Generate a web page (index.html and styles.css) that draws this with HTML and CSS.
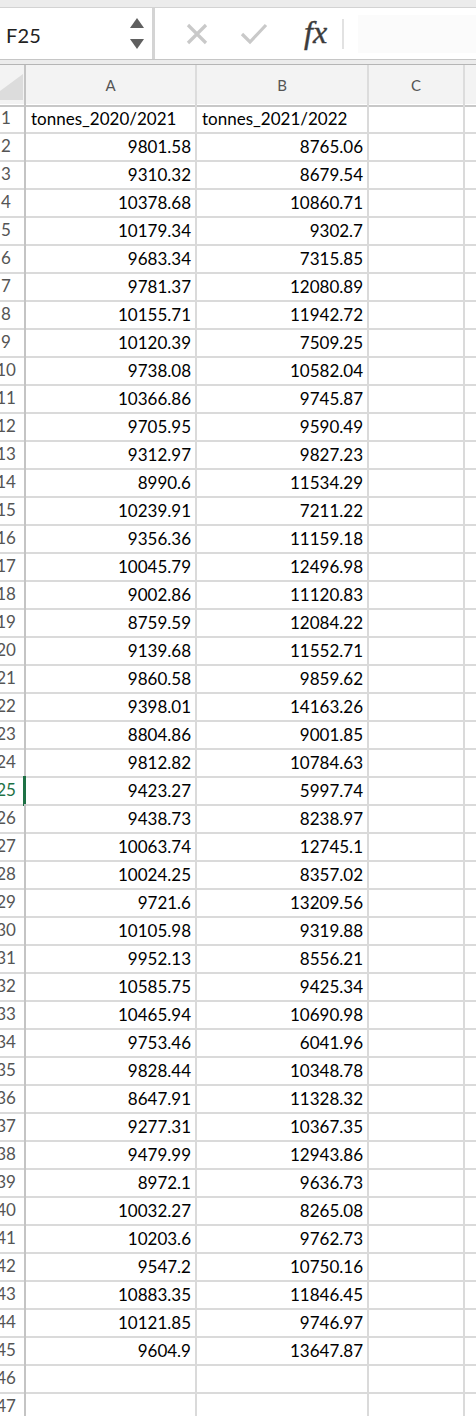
FILE: index.html
```html
<!DOCTYPE html>
<html>
<head>
<meta charset="utf-8">
<link rel="stylesheet" href="styles.css">
</head>
<body>
<div class="topband"></div>
<div class="toolbar">
  <div class="namebox">
    <span class="ref">F25</span>
    <svg class="spin" width="16" height="34" viewBox="0 0 16 34">
      <polygon points="8,1 15,11 1,11" fill="#5f5f5f"/>
      <polygon points="1,22 15,22 8,32" fill="#5f5f5f"/>
    </svg>
  </div>
  <div class="formula">
    <svg class="ico x" width="24" height="24" viewBox="0 0 24 24">
      <path d="M3 3 L21 21 M21 3 L3 21" stroke="#c9c9c9" stroke-width="3.2" fill="none"/>
    </svg>
    <svg class="ico check" width="28" height="24" viewBox="0 0 28 24">
      <path d="M2 12 L10 20 L26 3" stroke="#c9c9c9" stroke-width="3.2" fill="none"/>
    </svg>
    <span class="fx">fx</span>
    <span class="sep"></span>
    <div class="input"></div>
  </div>
</div>
<div class="gapband"></div>
<div class="sheet">
  <div class="row head">
    <div class="rh corner"><svg width="38" height="37" viewBox="0 0 38 37"><polygon points="0,35 35,35 35,9" fill="#dcdcdc"/></svg></div>
    <div class="ch">A</div><div class="ch">B</div><div class="ch">C</div><div class="ch last"></div>
  </div>
  <div class="row"><div class="rh">1</div><div class="c t">tonnes_2020/2021</div><div class="c t">tonnes_2021/2022</div><div class="c"></div><div class="c last"></div></div>
  <div class="row"><div class="rh">2</div><div class="c">9801.58</div><div class="c">8765.06</div><div class="c"></div><div class="c last"></div></div>
  <div class="row"><div class="rh">3</div><div class="c">9310.32</div><div class="c">8679.54</div><div class="c"></div><div class="c last"></div></div>
  <div class="row"><div class="rh">4</div><div class="c">10378.68</div><div class="c">10860.71</div><div class="c"></div><div class="c last"></div></div>
  <div class="row"><div class="rh">5</div><div class="c">10179.34</div><div class="c">9302.7</div><div class="c"></div><div class="c last"></div></div>
  <div class="row"><div class="rh">6</div><div class="c">9683.34</div><div class="c">7315.85</div><div class="c"></div><div class="c last"></div></div>
  <div class="row"><div class="rh">7</div><div class="c">9781.37</div><div class="c">12080.89</div><div class="c"></div><div class="c last"></div></div>
  <div class="row"><div class="rh">8</div><div class="c">10155.71</div><div class="c">11942.72</div><div class="c"></div><div class="c last"></div></div>
  <div class="row"><div class="rh">9</div><div class="c">10120.39</div><div class="c">7509.25</div><div class="c"></div><div class="c last"></div></div>
  <div class="row"><div class="rh">10</div><div class="c">9738.08</div><div class="c">10582.04</div><div class="c"></div><div class="c last"></div></div>
  <div class="row"><div class="rh">11</div><div class="c">10366.86</div><div class="c">9745.87</div><div class="c"></div><div class="c last"></div></div>
  <div class="row"><div class="rh">12</div><div class="c">9705.95</div><div class="c">9590.49</div><div class="c"></div><div class="c last"></div></div>
  <div class="row"><div class="rh">13</div><div class="c">9312.97</div><div class="c">9827.23</div><div class="c"></div><div class="c last"></div></div>
  <div class="row"><div class="rh">14</div><div class="c">8990.6</div><div class="c">11534.29</div><div class="c"></div><div class="c last"></div></div>
  <div class="row"><div class="rh">15</div><div class="c">10239.91</div><div class="c">7211.22</div><div class="c"></div><div class="c last"></div></div>
  <div class="row"><div class="rh">16</div><div class="c">9356.36</div><div class="c">11159.18</div><div class="c"></div><div class="c last"></div></div>
  <div class="row"><div class="rh">17</div><div class="c">10045.79</div><div class="c">12496.98</div><div class="c"></div><div class="c last"></div></div>
  <div class="row"><div class="rh">18</div><div class="c">9002.86</div><div class="c">11120.83</div><div class="c"></div><div class="c last"></div></div>
  <div class="row"><div class="rh">19</div><div class="c">8759.59</div><div class="c">12084.22</div><div class="c"></div><div class="c last"></div></div>
  <div class="row"><div class="rh">20</div><div class="c">9139.68</div><div class="c">11552.71</div><div class="c"></div><div class="c last"></div></div>
  <div class="row"><div class="rh">21</div><div class="c">9860.58</div><div class="c">9859.62</div><div class="c"></div><div class="c last"></div></div>
  <div class="row"><div class="rh">22</div><div class="c">9398.01</div><div class="c">14163.26</div><div class="c"></div><div class="c last"></div></div>
  <div class="row"><div class="rh">23</div><div class="c">8804.86</div><div class="c">9001.85</div><div class="c"></div><div class="c last"></div></div>
  <div class="row"><div class="rh">24</div><div class="c">9812.82</div><div class="c">10784.63</div><div class="c"></div><div class="c last"></div></div>
  <div class="row"><div class="rh sel">25</div><div class="c">9423.27</div><div class="c">5997.74</div><div class="c"></div><div class="c last"></div></div>
  <div class="row"><div class="rh">26</div><div class="c">9438.73</div><div class="c">8238.97</div><div class="c"></div><div class="c last"></div></div>
  <div class="row"><div class="rh">27</div><div class="c">10063.74</div><div class="c">12745.1</div><div class="c"></div><div class="c last"></div></div>
  <div class="row"><div class="rh">28</div><div class="c">10024.25</div><div class="c">8357.02</div><div class="c"></div><div class="c last"></div></div>
  <div class="row"><div class="rh">29</div><div class="c">9721.6</div><div class="c">13209.56</div><div class="c"></div><div class="c last"></div></div>
  <div class="row"><div class="rh">30</div><div class="c">10105.98</div><div class="c">9319.88</div><div class="c"></div><div class="c last"></div></div>
  <div class="row"><div class="rh">31</div><div class="c">9952.13</div><div class="c">8556.21</div><div class="c"></div><div class="c last"></div></div>
  <div class="row"><div class="rh">32</div><div class="c">10585.75</div><div class="c">9425.34</div><div class="c"></div><div class="c last"></div></div>
  <div class="row"><div class="rh">33</div><div class="c">10465.94</div><div class="c">10690.98</div><div class="c"></div><div class="c last"></div></div>
  <div class="row"><div class="rh">34</div><div class="c">9753.46</div><div class="c">6041.96</div><div class="c"></div><div class="c last"></div></div>
  <div class="row"><div class="rh">35</div><div class="c">9828.44</div><div class="c">10348.78</div><div class="c"></div><div class="c last"></div></div>
  <div class="row"><div class="rh">36</div><div class="c">8647.91</div><div class="c">11328.32</div><div class="c"></div><div class="c last"></div></div>
  <div class="row"><div class="rh">37</div><div class="c">9277.31</div><div class="c">10367.35</div><div class="c"></div><div class="c last"></div></div>
  <div class="row"><div class="rh">38</div><div class="c">9479.99</div><div class="c">12943.86</div><div class="c"></div><div class="c last"></div></div>
  <div class="row"><div class="rh">39</div><div class="c">8972.1</div><div class="c">9636.73</div><div class="c"></div><div class="c last"></div></div>
  <div class="row"><div class="rh">40</div><div class="c">10032.27</div><div class="c">8265.08</div><div class="c"></div><div class="c last"></div></div>
  <div class="row"><div class="rh">41</div><div class="c">10203.6</div><div class="c">9762.73</div><div class="c"></div><div class="c last"></div></div>
  <div class="row"><div class="rh">42</div><div class="c">9547.2</div><div class="c">10750.16</div><div class="c"></div><div class="c last"></div></div>
  <div class="row"><div class="rh">43</div><div class="c">10883.35</div><div class="c">11846.45</div><div class="c"></div><div class="c last"></div></div>
  <div class="row"><div class="rh">44</div><div class="c">10121.85</div><div class="c">9746.97</div><div class="c"></div><div class="c last"></div></div>
  <div class="row"><div class="rh">45</div><div class="c">9604.9</div><div class="c">13647.87</div><div class="c"></div><div class="c last"></div></div>
  <div class="row"><div class="rh">46</div><div class="c"></div><div class="c"></div><div class="c"></div><div class="c last"></div></div>
  <div class="row"><div class="rh">47</div><div class="c"></div><div class="c"></div><div class="c"></div><div class="c last"></div></div>
</div>
</body>
</html>
```
FILE: styles.css
```css
* { box-sizing: border-box; }
html, body { margin: 0; padding: 0; background: #fff; overflow: hidden; }
body { width: 476px; height: 1416px; font-family: Lato, "Open Sans", sans-serif; }

.topband { height: 7px; background: #ececec; }

.toolbar {
  display: flex;
  height: 53px;
  border-top: 1px solid #d3d3d3;
  border-bottom: 1px solid #c6c6c6;
  background: #fff;
}
.namebox {
  width: 155px;
  flex: none;
  display: flex;
  align-items: center;
  justify-content: space-between;
  padding: 0 7px 0 6px;
  border-right: 3px solid #d4d4d4;
}
.ref { font-size: 20px; color: #222; letter-spacing: 0.2px; margin-top: 2px; }
.spin { display: block; }

.formula {
  flex: 1;
  display: flex;
  align-items: center;
  min-width: 0;
}
.ico { display: block; flex: none; }
.ico.x { margin-left: 30px; }
.ico.check { margin-left: 31px; }
.fx {
  margin-left: 36px;
  font-family: "Liberation Serif", "DejaVu Serif", serif;
  font-style: italic;
  font-size: 32px;
  color: #3c3c3c;
  letter-spacing: 0;
  line-height: 1;
  margin-top: -3px;
  -webkit-text-stroke: 0.4px #3c3c3c;
}
.sep { width: 2px; height: 30px; background: #e2e2e2; margin-left: 15px; flex: none; }
.input { flex: 1; height: 38px; margin-left: 14px; background: #fbfbfb; }

.gapband { height: 5px; background: #ececec; border-bottom: 1px solid #b5b5b5; }

.sheet { margin-left: -14px; }
.row {
  display: grid;
  grid-template-columns: 40px 171px 172px 96px 1fr;
  height: 28px;
}
.row.head { height: 39px; background: #f3f3f3; }

.rh {
  border-right: 2px solid #c4c4c4;
  border-bottom: 2px solid #dadada;
  text-align: center;
  font-size: 17px;
  color: #555;
  line-height: 28px;
  padding-left: 2px;
  position: relative;
  white-space: nowrap;
}
.rh.sel { color: #1e7145; }
.rh.sel::after {
  content: "";
  position: absolute;
  right: -2px;
  top: 0;
  bottom: -2px;
  width: 3px;
  background: #1e7145;
}
.head .rh { border-bottom: 2px solid #c8c8c8; }
.corner svg { display: block; }

.ch {
  border-right: 2px solid #dcdcdc;
  border-bottom: 2px solid #c8c8c8;
  text-align: center;
  font-size: 15px;
  color: #555;
  line-height: 40px;
}
.c {
  border-right: 2px solid #dadada;
  border-bottom: 2px solid #dadada;
  font-size: 17px;
  color: #000;
  text-align: right;
  padding-right: 4px;
  line-height: 29px;
  white-space: nowrap;
  overflow: hidden;
}
.c.t { text-align: left; padding-left: 5px; padding-right: 0; }
.last { border-right: none; }
```
